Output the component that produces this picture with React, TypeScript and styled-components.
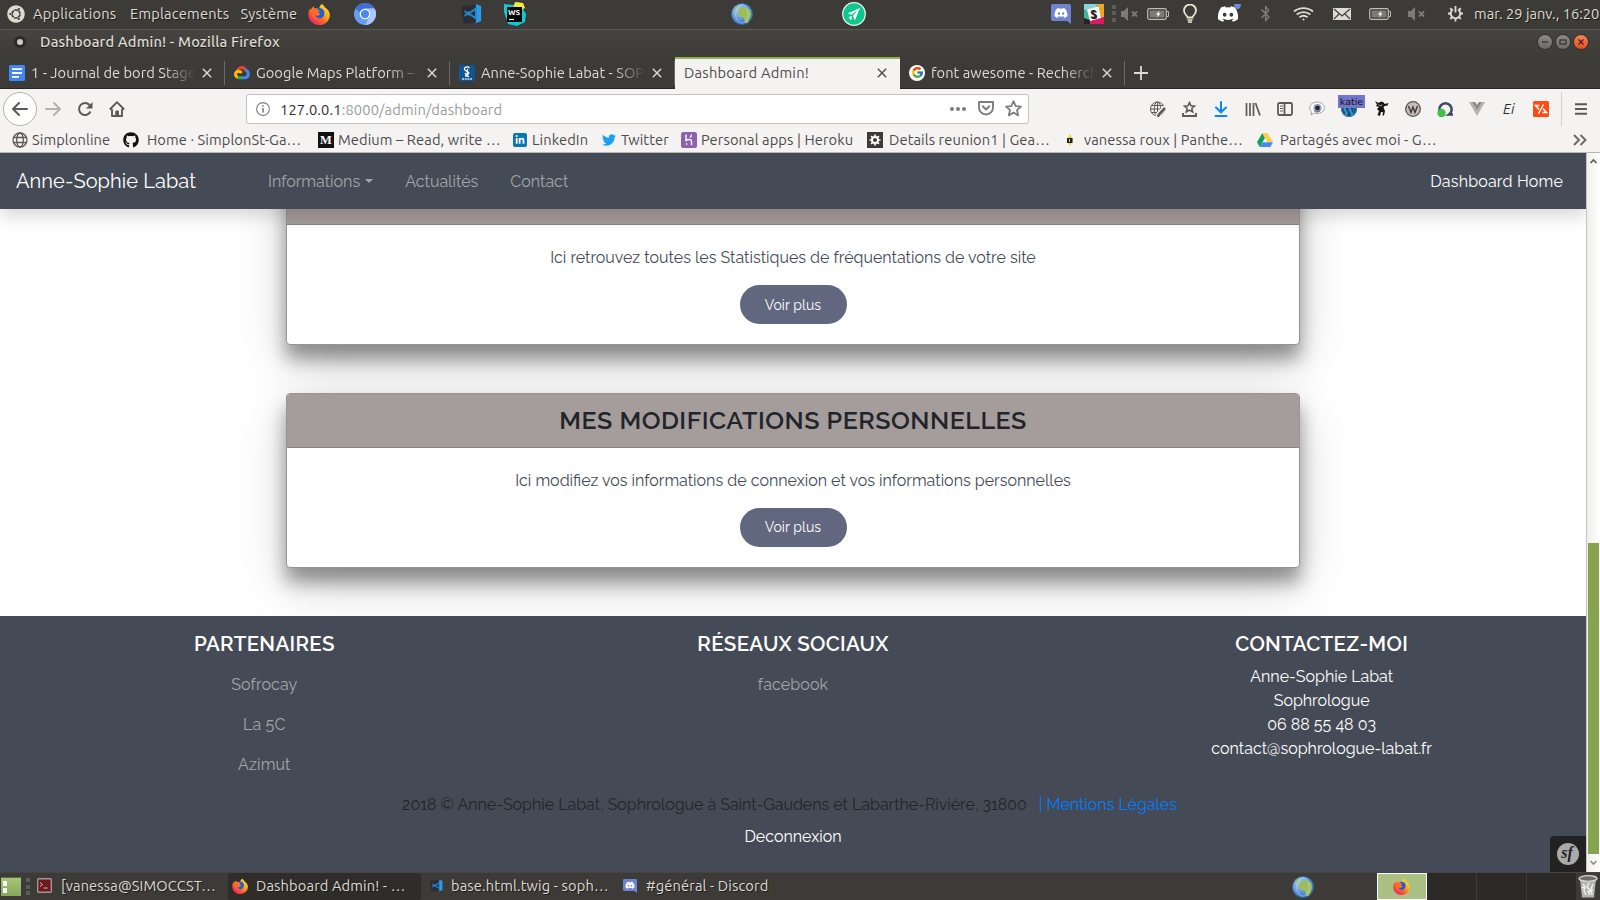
import React from 'react';
import styled, { createGlobalStyle, css } from 'styled-components';
import { FaGithub, FaLinkedinIn, FaTwitter, FaDiscord, FaUbuntu, FaBluetoothB, FaWordpressSimple } from 'react-icons/fa';
import { FcGoogle } from 'react-icons/fc';

const Global = createGlobalStyle`
  *{box-sizing:border-box}
  html,body{margin:0;padding:0;background:#3c3b37}
  body{width:1600px;height:900px;overflow:hidden;font-family:Ubuntu,"Noto Sans",sans-serif;font-size:14.67px}
  svg{display:block;flex:none}
`;

const Desktop = styled.div`
  width: 1600px;
  height: 900px;
  display: flex;
  flex-direction: column;
  overflow: hidden;
`;

const Item = styled.span<{ $l?: number; $w?: number }>`
  flex: none;
  display: flex;
  align-items: center;
  white-space: pre;
  margin-left: ${p => p.$l ?? 0}px;
  ${p => p.$w !== undefined && css`width: ${p.$w}px;`}
`;

/* ---------- system panel ---------- */
const Panel = styled.header`
  height: 30px;
  flex: none;
  display: flex;
  align-items: center;
  padding-bottom: 2px;
  background: #3c3b37;
  border-bottom: 1px solid #5a5955;
  color: #dfdbd2;
  letter-spacing: 0.2px;
  text-shadow: 1px 1px 0 #1c1b19;
`;

const Clock = styled.span`
  white-space: pre;
  letter-spacing: 0;
`;

const Grip = styled.span<{ $l: number }>`
  flex: none;
  width: 4px;
  height: 18px;
  margin-left: ${p => p.$l}px;
  background: repeating-linear-gradient(#5d5c58 0 4px, transparent 4px 6.5px);
`;

/* ---------- window chrome ---------- */
const TitleBar = styled.div`
  height: 27px;
  flex: none;
  display: flex;
  align-items: center;
  padding-bottom: 4px;
  background: linear-gradient(#454440, #3d3c38);
  color: #dfdbd2;
  font-weight: 500;
  letter-spacing: 0.17px;
  text-shadow: 0 1px 0 #1c1b19;
`;

const WindowDot = styled.span`
  width: 12px;
  height: 12px;
  margin-left: 14px;
  border-radius: 50%;
  border: 3px solid #2b2a27;
  background: #cfcbc2;
`;

const WinButton = styled.span<{ $close?: boolean }>`
  width: 16px;
  height: 16px;
  margin-right: 2px;
  display: flex;
  align-items: center;
  justify-content: center;
  border-radius: 50%;
  border: 1px solid #33322f;
  background: ${p => (p.$close ? 'linear-gradient(#f4835b,#e2501f)' : 'linear-gradient(#8d8b85,#6b6a64)')};
`;

const WinButtons = styled.div`
  margin-left: auto;
  margin-right: 9px;
  padding-top: 1px;
  display: flex;
`;

const TabStrip = styled.div`
  height: 32px;
  flex: none;
  display: flex;
  background: #3c3b37;
  color: #dfdbd2;
`;

const TabBox = styled.div<{ $active?: boolean }>`
  width: 225px;
  flex: none;
  display: flex;
  align-items: center;
  padding-left: 9px;
  padding-right: 13px;
  position: relative;
  border-bottom: 1px solid #272624;
  ${p => p.$active
    ? css`
        background: #f4f3f1;
        color: #4c4c4c;
        border-top: 2px solid #94b158;
        border-bottom-color: #f4f3f1;
        padding-bottom: 2px;
      `
    : css`
        &::after { content: ''; position: absolute; right: 0; top: 4px; bottom: 3px; width: 1px; background: #6b6a66; }
      `}
`;

const TabTitle = styled.span<{ $fade?: boolean; $l: number }>`
  flex: 1;
  min-width: 0;
  overflow: hidden;
  white-space: pre;
  letter-spacing: ${p => (p.$fade ? 0.03 : 0.22)}px;
  margin-left: ${p => p.$l}px;
  margin-right: 6px;
  ${p => p.$fade && css`mask-image: linear-gradient(90deg, #000 80%, transparent);`}
`;

const TabRest = styled.div`
  flex: 1;
  display: flex;
  align-items: center;
  padding-left: 9px;
  border-bottom: 1px solid #272624;
`;

const Toolbar = styled.div`
  height: 39px;
  flex: none;
  display: flex;
  align-items: center;
  background: #f4f3f1;
  color: #5b5a58;
`;

const BackButton = styled.span`
  width: 34px;
  height: 34px;
  margin-left: 3px;
  border: 1px solid #b4b2ae;
  border-radius: 50%;
  background: #fff;
  display: flex;
  align-items: center;
  justify-content: center;
`;

const UrlBar = styled.div`
  width: 783px;
  height: 30px;
  margin-left: 121px;
  display: flex;
  align-items: center;
  border: 1px solid #c3c1bd;
  border-radius: 3px;
  background: #fff;
  color: #9a9a9a;
  padding: 0 6px 0 9px;
`;

const UrlText = styled.span`
  margin-left: 10px;
  padding-top: 1px;
  flex: 1;
  white-space: pre;
  letter-spacing: 0.14px;
  b { font-weight: 400; color: #2d2d2d; }
`;

const Extensions = styled.div`
  margin-left: 112px;
  display: flex;
  height: 100%;
`;

const Ext = styled.span`
  width: 32px;
  display: flex;
  align-items: center;
  justify-content: center;
  position: relative;
`;

const Badge = styled.span`
  position: absolute;
  left: 5px;
  top: 6px;
  width: 27px;
  height: 13px;
  background: #7275c9;
  color: #111;
  font: 9.5px/13px "DejaVu Sans", sans-serif;
  text-align: center;
`;

const MenuArea = styled.span`
  margin-left: 4px;
  height: 34px;
  border-left: 1px solid #d3d1ce;
  padding-left: 13px;
  display: flex;
  align-items: center;
`;

const Bookmarks = styled.div`
  height: 25px;
  flex: none;
  display: flex;
  align-items: center;
  padding-bottom: 1px;
  background: #f4f3f1;
  color: #4c4c4c;
  letter-spacing: 0.1px;
  border-bottom: 1px solid #b9b6b2;
`;

const Square = styled.span<{ $bg: string; $r?: number; $size?: number }>`
  width: ${p => p.$size ?? 16}px;
  height: ${p => p.$size ?? 16}px;
  border-radius: ${p => p.$r ?? 0}px;
  background: ${p => p.$bg};
  color: #fff;
  display: flex;
  align-items: center;
  justify-content: center;
  overflow: hidden;
`;

const Serif = styled.span`
  font: 700 12.5px/16px "Liberation Serif", serif;
`;

const Script = styled.span`
  font: italic 400 14px Ubuntu, "Noto Sans", sans-serif;
  letter-spacing: 0.5px;
  color: #2c2c2c;
`;

/* ---------- page ---------- */
const Stage = styled.div`
  height: 719px;
  flex: none;
  display: flex;
  background: #fff;
`;

const Page = styled.main`
  width: 1586px;
  height: 100%;
  position: relative;
  overflow: hidden;
  display: flex;
  flex-direction: column;
  font-family: Raleway, Lato, sans-serif;
  font-size: 16px;
  line-height: 24px;
  color: #454b56;
`;

const Navbar = styled.nav`
  height: 56px;
  flex: none;
  z-index: 2;
  display: flex;
  align-items: center;
  padding: 0 23px 0 16px;
  background: #454b56;
  color: #a2a5ab;
  box-shadow: 0 8px 16px rgba(0, 0, 0, 0.15);
`;

const Brand = styled.span`
  width: 252px;
  font-size: 20px;
  letter-spacing: 0.08px;
  color: #fff;
`;

const NavLink = styled.span<{ $white?: boolean }>`
  display: flex;
  align-items: center;
  padding-top: 2px;
  margin-right: 32px;
  ${p => p.$white && css`color: #fff; margin: 0 0 0 auto; letter-spacing: 0.2px;`}
`;

const Caret = styled.i`
  margin-left: 5px;
  margin-top: -2px;
  border: 4.8px solid transparent;
  border-top-color: currentColor;
  border-bottom: 0;
`;

const Content = styled.section`
  height: 407px;
  flex: none;
  display: flex;
  flex-direction: column;
  align-items: center;
  gap: 48px;
`;

const CardBox = styled.article<{ $scrolled?: boolean }>`
  width: 1014px;
  height: 175px;
  flex: none;
  margin-top: ${p => (p.$scrolled ? -39 : 0)}px;
  border: 1px solid #9b9393;
  border-radius: 4px;
  background: #fff;
  text-align: center;
  box-shadow: 0 14px 18px rgba(0, 0, 0, 0.37), 0 17px 50px rgba(0, 0, 0, 0.19);
`;

const CardHead = styled.h4`
  height: 54px;
  margin: 0;
  border-radius: 3px 3px 0 0;
  border-bottom: 1px solid #8c8383;
  background: #a59c9c;
  color: #212529;
  font-size: 25px;
  font-weight: 600;
  letter-spacing: 0.5px;
  line-height: 52px;
`;

const CardBody = styled.div`
  display: flex;
  flex-direction: column;
  align-items: center;
  gap: 15px;
  padding-top: 21px;
`;

const Pill = styled.button<{ $raised?: boolean }>`
  width: 107px;
  height: 39px;
  padding: 0 0 ${p => (p.$raised ? 1 : 0)}px;
  border: 0;
  border-radius: 20px;
  background: #626780;
  color: #fff;
  font: 400 14px Raleway, Lato, sans-serif;
  letter-spacing: 0.08px;
`;

const Footer = styled.footer`
  flex: 1;
  z-index: 1;
  background: #454b56;
  padding-top: 16px;
  color: #fff;
`;

const Columns = styled.div`
  display: grid;
  grid-template-columns: repeat(3, 1fr);
  height: 161px;
  text-align: center;
`;

const ColTitle = styled.h5`
  margin: 0 0 9px;
  font-size: 20.5px;
  font-weight: 600;
  letter-spacing: 0.3px;
  line-height: 24px;
`;

const FootLink = styled.div`
  padding: 8px 0;
  color: #a2a5ab;
  letter-spacing: 0.12px;
`;

const Legal = styled.p`
  margin: 0 7px 8px 0;
  display: flex;
  justify-content: center;
  gap: 12px;
  color: #212529;
  letter-spacing: -0.02px;
  a { color: #007bff; }
`;

const Logout = styled.div`
  text-align: center;
`;

const SfToolbar = styled.div`
  position: absolute;
  right: 0;
  bottom: 0;
  z-index: 2;
  width: 36px;
  height: 36px;
  border-top-left-radius: 4px;
  background: #222;
  display: flex;
  align-items: center;
  justify-content: center;
`;

const SfDisc = styled.span`
  width: 22px;
  height: 22px;
  border-radius: 50%;
  background: #aaa;
  color: #222;
  font: italic 700 16px/20px "Liberation Serif", serif;
  text-align: center;
  padding-right: 2px;
`;

const Scrollbar = styled.div`
  width: 14px;
  border-left: 1px solid #c6c3bf;
  background: linear-gradient(90deg, #f0efed, #fff);
  display: flex;
  flex-direction: column;
  align-items: center;
  color: #55534f;
`;

const Thumb = styled.div`
  margin-top: 373px;
  width: 11px;
  height: 311px;
  background: #86a450;
`;

/* ---------- taskbar ---------- */
const Taskbar = styled.footer`
  height: 28px;
  flex: none;
  display: flex;
  align-items: center;
  background: #3c3b37;
  border-top: 1px solid #454440;
  color: #dfdbd2;
  letter-spacing: 0.12px;
  text-shadow: 1px 1px 0 #1c1b19;
`;

const Task = styled.div<{ $w: number; $active?: boolean }>`
  width: ${p => p.$w}px;
  height: 27px;
  flex: none;
  display: flex;
  align-items: center;
  padding: 0 0 2px 4px;
  border-radius: 3px;
  ${p => p.$active && css`background: #2e2d2a;`}
`;

const Workspace = styled.span<{ $on?: boolean }>`
  width: 50px;
  height: 27px;
  flex: none;
  display: flex;
  align-items: center;
  justify-content: center;
  padding-right: ${p => (p.$on ? 2 : 0)}px;
  background: ${p => (p.$on ? '#aac085' : '#2b2a29')};
  border: ${p => (p.$on ? '1px solid #fff' : '0')};
  border-right: 1px solid ${p => (p.$on ? '#fff' : '#3c3b37')};
`;

const DesktopToggle = styled.span`
  width: 20px;
  height: 19px;
  margin-left: 1px;
  padding: 3px 2px;
  display: flex;
  flex-direction: column;
  justify-content: space-between;
  background: linear-gradient(#a9c47c, #88a857);
  border-top: 1px solid #5c6b42;
  &::before, &::after { content: ''; width: 4px; height: 5px; background: #fff; }
`;

/* ---------- drawings ---------- */
type IconProps = { s?: number };

const Firefox = ({ s = 22 }: IconProps) => (
  <svg width={s} height={s} viewBox="0 0 24 24">
    <defs>
      <linearGradient id="ffg" x1="1" y1="0" x2=".1" y2="1">
        <stop offset="0" stopColor="#fff24a" /><stop offset=".35" stopColor="#ffb21f" />
        <stop offset=".65" stopColor="#ff5a2c" /><stop offset="1" stopColor="#e3137f" />
      </linearGradient>
    </defs>
    <path d="M15 1c2 1 3 2.500 3.500 4C21 6.500 24 9.500 23.800 13.500 23.500 19.500 18.500 24 12.300 24 5.600 24 .4 19 .4 12.600c0-3 .7-5.300 2-7l.5 2C4 5.500 5.200 4.500 6.300 3.600L6.500 6c2-.6 4-.3 5.500.5C12.500 4 13.500 2.300 15 1z" fill="url(#ffg)" />
    <path d="M9 6.500c3.500-2.500 8-.3 8.700 3 .8 3.800-1.500 7.300-5.200 7.300-2.500 0-4.500-1.300-5-3.300 1.300.8 2.800.8 4-.2.9-.7 2-.7 2-1.500-.2-.8-1.600-.6-2.500-1-.5-.8 1.200-1.500 1.500-2.300-1.200-.7-2.200-1.500-3.500-2z" fill="#1f5fd0" />
    <path d="M3 8c1.500-1.800 3.500-2 5.500-1.200 1.500.8 2.500 1.500 4 2-.3.900-2 1.500-2.200 2.200-1 .5-2.500.7-2.800 2 .2 2 2.500 4 5 4-2.500 1.500-6.500.5-8-2.500C3.300 12.500 3 10 3 8z" fill="#ff6a2a" />
  </svg>
);

const Chromium = () => (
  <svg width="22" height="22" viewBox="0 0 24 24">
    <circle cx="12" cy="12" r="12" fill="#6a9bf4" />
    <path d="M1.600 6A12 12 0 0 1 22.400 6H12a6 6 0 0 0-5.500 4z" fill="#3f6fd6" />
    <path d="M22.400 6A12 12 0 0 1 12 24l5.200-9A6 6 0 0 0 12 6z" fill="#a9c7fb" />
    <circle cx="12" cy="12" r="5.800" fill="#fff" /><circle cx="12" cy="12" r="4.500" fill="#4c87f0" />
  </svg>
);

const VsCode = ({ s = 21 }: IconProps) => (
  <svg width={s} height={s} viewBox="0 0 24 24">
    <path d="M0 4l17-3v21L3 24z" fill="#2a2d33" />
    <path d="M17 1l6 2.500v17L17 23z" fill="#2d9be8" />
    <path d="M17 6.500v11L9 12z" fill="none" stroke="#2486cf" strokeWidth="2.200" />
    <path d="M4 9l5.500 5M4 15l5.500-5" stroke="#2486cf" strokeWidth="2" />
  </svg>
);

const WebStorm = () => (
  <svg width="24" height="24" viewBox="0 0 24 24">
    <path d="M1 2l9 1 5-3 6 3-1 4 3 5-1 8-8 4-9-2L1 10z" fill="#0ccbd4" />
    <path d="M12 0l8 1 2 5-4 2h-8z" fill="#f5ec3a" />
    <rect x="4" y="5" width="15" height="15" fill="#000" />
    <text x="5" y="12.800" fontSize="8" fontWeight="700" fill="#fff" letterSpacing="0" fontFamily="Ubuntu, sans-serif">WS</text>
    <path d="M6 17.500h5" stroke="#fff" strokeWidth="1.200" />
  </svg>
);

const Earth = () => (
  <svg width="22" height="22" viewBox="0 0 24 24">
    <defs><radialGradient id="eg" cx=".35" cy=".3" r=".8"><stop offset="0" stopColor="#a6cdf3" /><stop offset="1" stopColor="#2b6bc0" /></radialGradient></defs>
    <circle cx="12" cy="12" r="11.500" fill="url(#eg)" stroke="#3465a4" />
    <path d="M8 7c2-2 5-3 9-2l4 3 1 5-2 5-2 4-3-1-1-5-4-1-3-3z" fill="#9dbd5d" />
    <path d="M4 5l3-2 1 2-3 3z" fill="#9dbd5d" />
    <ellipse cx="12" cy="12" rx="7" ry="10" fill="none" stroke="#cfe3f8" strokeOpacity=".5" />
  </svg>
);

const PlaneBadge = () => (
  <svg width="24" height="24" viewBox="0 0 24 24">
    <circle cx="12" cy="12" r="11.300" fill="#0fc78c" stroke="#e8f5ef" strokeWidth="1.200" />
    <path d="M18 6L5.500 11.500l4 1.200 6-4.700-4.500 6 1.800 4.500z" fill="#fff" />
    <path d="M6.500 15l3-1 .3 3-1.300 1z" fill="#fff" />
  </svg>
);

const DiscordTile = ({ s = 20 }: IconProps) => (
  <svg width={s} height={s} viewBox="0 0 20 20">
    <path d="M2 0h16a2 2 0 0 1 2 2v18l-4-3H2a2 2 0 0 1-2-2V2a2 2 0 0 1 2-2z" fill="#6f83d0" />
    <g transform="translate(3 2)"><FaDiscord size={14} color="#fff" /></g>
  </svg>
);

const Slack = () => (
  <svg width="20" height="20" viewBox="0 0 20 20">
    <rect width="20" height="20" rx="1" fill="#3eb890" />
    <path d="M0 0h13L12 4 0 6z" fill="#85d3dd" /><path d="M13 0h7v14l-4-2z" fill="#e9a820" />
    <path d="M20 13v7H6l1-4z" fill="#e01563" /><path d="M0 14l6 2 0 4H0z" fill="#2c1f2d" />
    <path d="M3 5.500l11.500-3L17 14 6 17z" fill="#fff" />
    <text x="6.300" y="14" fontSize="11" fontWeight="700" fill="#222" fontFamily="Ubuntu, sans-serif">S</text>
  </svg>
);

const Muted = () => (
  <svg width="18" height="14" viewBox="0 0 18 14" fill="#7d7b75">
    <path d="M0 4h3l4-4v14l-4-4H0z" /><path d="M11 4.500l5 5M16 4.500l-5 5" stroke="#7d7b75" strokeWidth="1.800" />
  </svg>
);

const Battery = () => (
  <svg width="22" height="12" viewBox="0 0 22 12">
    <rect x=".7" y=".7" width="18.600" height="10.600" rx="1.500" fill="none" stroke="#bfbbb2" strokeWidth="1.200" />
    <rect x="2.500" y="2.500" width="15" height="7" fill="#7d7b75" /><path d="M20 3.500h1.500v5H20" fill="none" stroke="#bfbbb2" />
    <path d="M12.500 2.500L9 6.400h2l-1 3 3.500-4h-2z" fill="#fff" />
  </svg>
);

const Bulb = () => (
  <svg width="14" height="19" viewBox="0 0 14 19" fill="none" stroke="#eee5cf" strokeWidth="1.800">
    <path d="M4.500 13.500c0-2-3.500-3-3.500-7a6 6 0 0 1 12 0c0 4-3.500 5-3.500 7z" /><path d="M4.500 16h5M5 18h4" strokeWidth="1.500" />
  </svg>
);

const DiscordTray = () => (
  <svg width="24" height="21" viewBox="0 0 24 21">
    <FaDiscord size={22} color="#fff" />
    <path d="M17 1h7c0 3-1.500 5-3.500 5S17 4 17 1z" fill="#7289da" />
  </svg>
);

const Wifi = () => (
  <svg width="21" height="14" viewBox="0 0 21 14" fill="none" stroke="#dfdbd2" strokeWidth="1.800">
    <path d="M1 4.500c5.500-4.500 13.500-4.500 19 0M3.700 7.500c4-3.300 9.600-3.300 13.600 0M6.500 10.300c2.500-2 5.500-2 8 0" /><circle cx="10.500" cy="12.500" r="1" fill="#dfdbd2" stroke="none" />
  </svg>
);

const Mail = () => (
  <svg width="18" height="12" viewBox="0 0 18 12">
    <rect width="18" height="12" fill="#dfdbd2" /><path d="M1 1l8 7 8-7M1 11l5-5M17 11l-5-5" fill="none" stroke="#3c3b37" strokeWidth="1.100" />
  </svg>
);

const Power = () => (
  <svg width="17" height="17" viewBox="0 0 17 17" fill="none" stroke="#dfdbd2" strokeWidth="2">
    <path d="M6 4.500a4.800 4.800 0 1 0 5 0" /><path d="M8.500 1v6.500M1 8.500h2.500M13.500 8.500H16M3.200 3.200l1.800 1.800M13.800 3.200L12 5M3.200 14l1.800-1.800M13.800 14L12 12.200M8.500 13.500v3" strokeWidth="1.800" />
  </svg>
);

const Close = () => (
  <svg width="10" height="10" viewBox="0 0 10 10" stroke="currentColor" strokeWidth="1.400"><path d="M.8.8l8.400 8.400M9.200.8L.8 9.200" /></svg>
);

const Docs = () => (
  <svg width="16" height="16" viewBox="0 0 16 16"><rect width="16" height="16" rx="1.500" fill="#4285f4" /><path d="M3 4.200h10M3 8h10M3 11.800h7" stroke="#fff" strokeWidth="1.800" /></svg>
);

const GCloud = () => (
  <svg width="16" height="14" viewBox="0 0 16 14" fill="none" strokeWidth="3">
    <path d="M3.500 5C4.500 1 9.500.3 11.500 4" stroke="#ea4335" />
    <path d="M11.200 4c3.800 1 4.300 6.500.3 7.800H8" stroke="#4285f4" />
    <path d="M8.500 11.800H4.500l-1.500-.7" stroke="#34a853" />
    <path d="M3.600 11.400C.5 10 1 5.500 4.500 5.200 6 5.200 7 6 7.500 7" stroke="#fbbc05" />
  </svg>
);

const Sophro = () => (
  <svg width="16" height="16" viewBox="0 0 16 16"><rect width="16" height="16" fill="#0f5494" /><path d="M10.500 3C8.500 1 5 2 5.500 4.300S10 6 9.800 8 6.500 9.300 6 8M8.500 4v8M6 10.500l4 1" fill="none" stroke="#fff" strokeWidth="1.300" /><path d="M3 14h10" stroke="#cfe0ee" strokeWidth="1.500" strokeDasharray="2 .7" /></svg>
);

const Arrow = ({ flip }: { flip?: boolean }) => (
  <svg width="16" height="16" viewBox="0 0 16 16" fill="none" stroke={flip ? '#b5b3b0' : '#5b5a58'} strokeWidth="2" strokeLinecap="round" strokeLinejoin="round">
    <path d={flip ? 'M1 8h14M9 2l6 6-6 6' : 'M15 8H1M7 2L1 8l6 6'} />
  </svg>
);

const Reload = () => (
  <svg width="16" height="16" viewBox="0 0 16 16" fill="none" stroke="#5b5a58" strokeWidth="2"><path d="M13.500 10.500A6 6 0 1 1 12.500 4" /><path d="M15.500 1v6.500H9z" fill="#5b5a58" stroke="none" /></svg>
);

const Home = () => (
  <svg width="16" height="16" viewBox="0 0 16 16" fill="none" stroke="#5b5a58" strokeWidth="1.900" strokeLinejoin="round"><path d="M.8 8.500L8 1.200l7.200 7.300M3 8v7h10V8" /><path d="M6.800 15v-5h2.600v5z" fill="#5b5a58" strokeWidth="1" /></svg>
);

const Info = () => (
  <svg width="14" height="14" viewBox="0 0 14 14" fill="none" stroke="#7d7d7d"><circle cx="7" cy="7" r="6.400" strokeWidth="1.100" /><path d="M7 6v4.500M7 3.300v1.500" strokeWidth="1.600" /></svg>
);

const Dots = () => (
  <svg width="16" height="4" viewBox="0 0 16 4" fill="#7d7d7d"><circle cx="2" cy="2" r="2" /><circle cx="8" cy="2" r="2" /><circle cx="14" cy="2" r="2" /></svg>
);

const Pocket = () => (
  <svg width="16" height="15" viewBox="0 0 16 15" fill="none" stroke="#7d7d7d" strokeWidth="1.900" strokeLinejoin="round"><path d="M1 1h14v5.500a7 7 0 0 1-14 0z" /><path d="M4.700 5.300L8 8.500l3.300-3.200" strokeLinecap="round" /></svg>
);

const Star = () => (
  <svg width="17" height="17" viewBox="0 0 17 17" fill="none" stroke="#7d7d7d" strokeWidth="1.800" strokeLinejoin="round"><path d="M8.500 1.200l2.200 4.900 5.200.5-3.900 3.500 1.200 5.300-4.700-2.800-4.700 2.800 1.200-5.300L1.100 6.600l5.200-.5z" /></svg>
);

const Globe = ({ pen }: { pen?: boolean }) => (
  <svg width={pen ? 17 : 16} height="16" viewBox="0 0 16 16" fill="none" stroke="#5b5a58" strokeWidth={pen ? 1 : 1.3}>
    <circle cx="8" cy="8" r="7" /><ellipse cx="8" cy="8" rx="3.300" ry="7" /><path d={pen ? 'M1 8h14M2 4.500h12M2 11.500h12M8 1v14' : 'M1.500 5.500h13M1.500 10.500h13'} />
    {pen && <><path d="M16 6l-7 7.500-1 3" stroke="#f4f3f1" strokeWidth="5" /><path d="M15.500 7L9.500 13.500l-1.200 2.300" stroke="#5b5a58" strokeWidth="2.600" /></>}
  </svg>
);

const StarTray = () => (
  <svg width="15" height="16" viewBox="0 0 15 16" fill="none" stroke="#5b5a58" strokeWidth="1.500"><path d="M7.500 1.500L9 4.800l3.500.3-2.700 2.300.9 3.500-3.200-1.900-3.200 1.900.9-3.500L2.500 5.100 6 4.800z" /><path d="M1 12v3h13v-3" strokeWidth="1.900" /></svg>
);

const Download = () => (
  <svg width="14" height="16" viewBox="0 0 14 16" fill="none" stroke="#0a84ff" strokeWidth="2" strokeLinecap="round"><path d="M7 1v10M2 6.500L7 11.300l5-4.800M1.500 15h11" /></svg>
);

const Library = () => (
  <svg width="16" height="14" viewBox="0 0 16 14" stroke="#5b5a58" strokeWidth="1.700"><path d="M1.500 1v13M5 1v13M8.500 1v13M10.500 1l4.500 12.500" /></svg>
);

const Sidebar = () => (
  <svg width="16" height="14" viewBox="0 0 16 14" fill="none" stroke="#5b5a58" strokeWidth="1.800"><rect x="1" y="1" width="14" height="12" rx="1.500" /><path d="M7.500 1v12" /><path d="M3 4h3M3 6.500h3M3 9h3" strokeWidth="1" /></svg>
);

const Bubble = () => (
  <svg width="16" height="15" viewBox="0 0 16 15"><path d="M8 1c4 0 7.300 2.500 7.300 5.800S12 12.500 8 12.500c-1 0-2-.2-2.800-.4L2 14l.8-3C1.500 10 .7 8.500.7 6.800.7 3.500 4 1 8 1z" fill="#fff" stroke="#a5a3a0" /><circle cx="8.500" cy="7" r="4" fill="#9aa0b8" /><circle cx="8.500" cy="7" r="2.400" fill="#23284a" /><path d="M5 9.500c1.500 2 4 2 6 .3" stroke="#7a4d3a" fill="none" /></svg>
);

const Ninja = () => (
  <svg width="15" height="17" viewBox="0 0 15 17" fill="#161616"><path d="M1 1l3.500 2L7 1.500l3 1L10.500 4l4-1-1 2.500-3 .5-1 1.500 1.500 3.500-1 4.500H8.500L9 12H7l-1 4-2.500-1L5 11 3 9l2-2-3-1 1-1.500z" /><path d="M4.500 4.800l2 1 2-1" stroke="#fff" strokeWidth=".7" fill="none" /></svg>
);

const WDisc = () => (
  <svg width="16" height="16" viewBox="0 0 16 16"><circle cx="8" cy="8" r="7.300" fill="#c8bfbb" stroke="#5a5350" strokeWidth="1.300" /><path d="M3.500 5L6 11.500 8 6l2 5.500L12.500 5" fill="none" stroke="#3f3a38" strokeWidth="1.400" /></svg>
);

const QRing = () => (
  <svg width="17" height="16" viewBox="0 0 17 16"><path d="M5 13.500A6.200 6.200 0 1 1 12 13.500h4M12.500 12v2.500" fill="none" stroke="#3f4a66" strokeWidth="2.600" /><circle cx="4.500" cy="12" r="4.200" fill="#45c04b" /></svg>
);

const Vue = () => (
  <svg width="16" height="14" viewBox="0 0 16 14"><path d="M0 0h4l4 7 4-7h4L8 14z" fill="#b3b3b3" /><path d="M3.200 0h3L8 3l1.800-3h3L8 8.300z" fill="#8c8c8c" /></svg>
);

const OrangeTag = () => (
  <svg width="16" height="16" viewBox="0 0 16 16"><rect width="16" height="16" rx="1.500" fill="#ff4a12" /><path d="M6.500 4.500H2.500l3.500 4M9.500 11.500h4l-3.500-4M10.500 3.500L5.500 12.500" stroke="#fff" strokeWidth="1.500" fill="none" /></svg>
);

const Menu = () => (
  <svg width="12" height="12" viewBox="0 0 12 12" stroke="#5b5a58" strokeWidth="1.900"><path d="M0 1.200h12M0 6h12M0 10.800h12" /></svg>
);

const Chevrons = () => (
  <svg width="14" height="12" viewBox="0 0 14 12" fill="none" stroke="#6b6a68" strokeWidth="2"><path d="M1 1l5 5-5 5M7.500 1l5 5-5 5" /></svg>
);

const HerokuMark = () => (
  <svg width="16" height="16" viewBox="0 0 16 16" fill="none" stroke="#fff" strokeWidth="1.400"><path d="M5 2.500v6c2-1.300 5.500-1.500 5.500.8v4M10.500 2.500c0 1.200-.4 2-1.200 3" /><path d="M5 10.500v3l1.600-1.500z" fill="#fff" stroke="none" /></svg>
);

const GearMark = () => (
  <svg width="12" height="12" viewBox="0 0 12 12" fill="none" stroke="#fff"><circle cx="6" cy="6" r="3" strokeWidth="2" /><path d="M6 .5v2M6 9.500v2M.5 6h2M9.500 6h2M2.100 2.100l1.400 1.400M8.500 8.500l1.400 1.400M9.900 2.100L8.500 3.500M3.500 8.500L2.100 9.900" strokeWidth="1.700" /></svg>
);

const Bee = () => (
  <svg width="16" height="14" viewBox="0 0 16 14"><path d="M8 1l3 6-3 6-3-6z" fill="#e8d33a" /><path d="M5 5h5.500v5H5z" fill="#222" /><path d="M7.500 6v3" stroke="#e8d33a" /></svg>
);

const Drive = () => (
  <svg width="16" height="14" viewBox="0 0 16 14"><path d="M5.300 0L0 9.300 2.700 14 8 4.700z" fill="#12a05c" /><path d="M5.300 0h5.400L16 9.300h-5.400z" fill="#ffcf48" /><path d="M5.400 9.300H16L13.300 14H2.700z" fill="#4688f4" /></svg>
);

const Terminal = () => (
  <svg width="15" height="15" viewBox="0 0 15 15"><rect x=".7" y=".7" width="13.600" height="13.600" rx="1" fill="#6e1a1c" stroke="#9a9a96" strokeWidth="1.400" /><path d="M3 4.500l2.500 2L3 8.500M6.500 10h4" stroke="#e0b4b0" fill="none" /></svg>
);

const Trash = () => (
  <svg width="20" height="24" viewBox="0 0 20 24"><path d="M2 4h16l-2 18.500H4z" fill="#b3b4b1" /><ellipse cx="10" cy="3.500" rx="9" ry="2.800" fill="#6b6c69" stroke="#d3d4d1" strokeWidth="1.300" /><path d="M5 9l2 3-1 4 2 4M11 8l-2 4 3 3-1 5M15 9l-2 5 1 6M3.500 13l4-1M9 17l6-2" stroke="#eef0ed" strokeWidth="1.400" fill="none" /></svg>
);

const Tick = ({ down }: { down?: boolean }) => (
  <svg width="14" height="17" viewBox="0 0 14 17" fill="none" stroke={down ? '#8d8b87' : '#5b5955'} strokeWidth="1.600"><path d={down ? 'M3.500 7L6.500 10l3-3' : 'M3.500 10L6.500 7l3 3'} /></svg>
);

/* ---------- composed parts ---------- */
const Tab = ({ icon, label, active, fade = true }: { icon?: React.ReactNode; label: string; active?: boolean; fade?: boolean }) => (
  <TabBox $active={active}>
    {icon}
    <TabTitle $l={icon ? 6 : 0} $fade={fade}>{label}</TabTitle>
    <Close />
  </TabBox>
);

const Card = ({ title, text, scrolled }: { title: string; text: string; scrolled?: boolean }) => (
  <CardBox $scrolled={scrolled}>
    <CardHead>{title}</CardHead>
    <CardBody>
      <span>{text}</span>
      <Pill $raised={!scrolled}>Voir plus</Pill>
    </CardBody>
  </CardBox>
);

export default function App() {
  return (
    <Desktop>
      <Global />
      <Panel>
        <Item $l={7} $w={26}><FaUbuntu size={18} color="#dfdbd2" /></Item>
        <Item $w={97}>Applications</Item>
        <Item $w={110.500}>Emplacements</Item>
        <Item $w={67}>Système</Item>
        <Item $w={46.500}><Firefox /></Item>
        <Item $w={107}><Chromium /></Item>
        <Item $w={42}><VsCode /></Item>
        <Item $w={228}><WebStorm /></Item>
        <Item $w={111}><Earth /></Item>
        <Item $w={209}><PlaneBadge /></Item>
        <Item $w={33}><DiscordTile /></Item>
        <Item $w={20}><Slack /></Item>
        <Grip $l={8} />
        <Item $l={5} $w={26}><Muted /></Item>
        <Item $w={36}><Battery /></Item>
        <Item $w={34}><Bulb /></Item>
        <Item $w={40}><DiscordTray /></Item>
        <Item $w={36}><FaBluetoothB size={17} color="#7d7b75" /></Item>
        <Item $w={40}><Wifi /></Item>
        <Item $w={36}><Mail /></Item>
        <Item $w={39}><Battery /></Item>
        <Item $w={39}><Muted /></Item>
        <Item $w={27}><Power /></Item>
        <Clock>mar. 29 janv., 16:20</Clock>
      </Panel>
      <TitleBar>
        <WindowDot />
        <Item $l={14}>Dashboard Admin! - Mozilla Firefox</Item>
        <WinButtons>
          <WinButton><svg width="8" height="8" stroke="#33322f" strokeWidth="1.300"><path d="M1 4h6" /></svg></WinButton>
          <WinButton><svg width="8" height="8" stroke="#33322f" strokeWidth="1.200" fill="none"><rect x="1" y="2" width="6" height="4" /></svg></WinButton>
          <WinButton $close><svg width="8" height="8" stroke="#4a2413" strokeWidth="1.300"><path d="M1.500 1.500l5 5M6.500 1.500l-5 5" /></svg></WinButton>
        </WinButtons>
      </TitleBar>
      <TabStrip>
        <Tab icon={<Docs />} label="1 - Journal de bord Stage" />
        <Tab icon={<GCloud />} label="Google Maps Platform –" />
        <Tab icon={<Sophro />} label="Anne-Sophie Labat - SOP" />
        <Tab label="Dashboard Admin!" active fade={false} />
        <Tab icon={<Square $bg="#fff" $r={8}><FcGoogle size={13} /></Square>} label="font awesome - Recherch" />
        <TabRest>
          <svg width="14" height="14" stroke="#dfdbd2" strokeWidth="1.800"><path d="M7 0v14M0 7h14" /></svg>
        </TabRest>
      </TabStrip>
      <Toolbar>
        <BackButton><Arrow /></BackButton>
        <Item $l={8} $w={32}><Arrow flip /></Item>
        <Item $w={32}><Reload /></Item>
        <Item $w={16}><Home /></Item>
        <UrlBar>
          <Info />
          <UrlText><b>127.0.0.1</b>:8000/admin/dashboard</UrlText>
          <Item $w={28}><Dots /></Item>
          <Item $w={27.500}><Pocket /></Item>
          <Star />
        </UrlBar>
        <Extensions>
          <Ext><Globe pen /></Ext>
          <Ext><StarTray /></Ext>
          <Ext><Download /></Ext>
          <Ext><Library /></Ext>
          <Ext><Sidebar /></Ext>
          <Ext><Bubble /></Ext>
          <Ext><Square $bg="#164a6e" $r={8}><FaWordpressSimple size={16} color="#2f9bd6" /></Square><Badge>katie</Badge></Ext>
          <Ext><Ninja /></Ext>
          <Ext><WDisc /></Ext>
          <Ext><QRing /></Ext>
          <Ext><Vue /></Ext>
          <Ext><Script>Ei</Script></Ext>
          <Ext><OrangeTag /></Ext>
        </Extensions>
        <MenuArea><Menu /></MenuArea>
      </Toolbar>
      <Bookmarks>
        <Item $l={12} $w={20}><Globe /></Item>
        <Item $w={91}>Simplonline</Item>
        <Item $w={24}><FaGithub size={16} color="#111" /></Item>
        <Item $w={171}>Home · SimplonSt-Ga…</Item>
        <Item $w={20}><Square $bg="#111"><Serif>M</Serif></Square></Item>
        <Item $w={175}>Medium – Read, write …</Item>
        <Item $w={19}><Square $bg="#0a77b5" $r={2} $size={14}><FaLinkedinIn size={10} /></Square></Item>
        <Item $w={70}>LinkedIn</Item>
        <Item $w={19}><FaTwitter size={14} color="#1da1f2" /></Item>
        <Item $w={60}>Twitter</Item>
        <Item $w={20}><Square $bg="#8a62ad" $r={2}><HerokuMark /></Square></Item>
        <Item $w={166}>Personal apps | Heroku</Item>
        <Item $w={22}><Square $bg="#3a3a3a"><GearMark /></Square></Item>
        <Item $w={173}>Details reunion1 | Gea…</Item>
        <Item $w={22}><Bee /></Item>
        <Item $w={173}>vanessa roux | Panthe…</Item>
        <Item $w={23}><Drive /></Item>
        <Item $w={293}>Partagés avec moi - G…</Item>
        <Chevrons />
      </Bookmarks>
      <Stage>
        <Page>
          <Navbar>
            <Brand>Anne-Sophie Labat</Brand>
            <NavLink>Informations<Caret /></NavLink>
            <NavLink>Actualités</NavLink>
            <NavLink>Contact</NavLink>
            <NavLink $white>Dashboard Home</NavLink>
          </Navbar>
          <Content>
            <Card scrolled title="" text="Ici retrouvez toutes les Statistiques de fréquentations de votre site" />
            <Card title="MES MODIFICATIONS PERSONNELLES" text="Ici modifiez vos informations de connexion et vos informations personnelles" />
          </Content>
          <Footer>
            <Columns>
              <div>
                <ColTitle>PARTENAIRES</ColTitle>
                <FootLink>Sofrocay</FootLink>
                <FootLink>La 5C</FootLink>
                <FootLink>Azimut</FootLink>
              </div>
              <div>
                <ColTitle>RÉSEAUX SOCIAUX</ColTitle>
                <FootLink>facebook</FootLink>
              </div>
              <div>
                <ColTitle>CONTACTEZ-MOI</ColTitle>
                <div>Anne-Sophie Labat</div>
                <div>Sophrologue</div>
                <div>06 88 55 48 03</div>
                <div>contact@sophrologue-labat.fr</div>
              </div>
            </Columns>
            <Legal><span>2018 © Anne-Sophie Labat, Sophrologue à Saint-Gaudens et Labarthe-Rivière, 31800</span><a>| Mentions Légales</a></Legal>
            <Logout>Deconnexion</Logout>
          </Footer>
          <SfToolbar><SfDisc>sf</SfDisc></SfToolbar>
        </Page>
        <Scrollbar>
          <Tick />
          <Thumb />
          <Tick down />
        </Scrollbar>
      </Stage>
      <Taskbar>
        <DesktopToggle />
        <Grip $l={5} />
        <Task $w={198}><Item $l={3} $w={24}><Terminal /></Item>[vanessa@SIMOCCST…</Task>
        <Task $w={193} $active><Item $w={24}><Firefox s={16} /></Item>Dashboard Admin! - …</Task>
        <Task $w={194}><Item $l={5} $w={21}><VsCode s={13} /></Item>base.html.twig - soph…</Task>
        <Task $w={673}><Item $l={4} $w={23}><DiscordTile s={14} /></Item>#général - Discord</Task>
        <Item $l={4} $w={85}><Earth /></Item>
        <Workspace $on><Firefox s={17} /></Workspace>
        <Workspace /><Workspace /><Workspace />
        <Item $l={1}><Trash /></Item>
      </Taskbar>
    </Desktop>
  );
}
